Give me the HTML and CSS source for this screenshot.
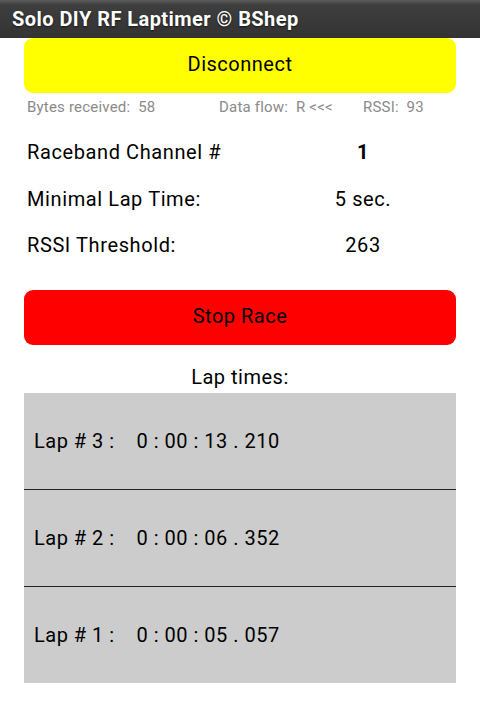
FILE: index.html
```html
<!DOCTYPE html>
<html>
<head>
<meta charset="utf-8">
<link rel="stylesheet" href="styles.css">
</head>
<body>
<header class="titlebar">Solo DIY RF Laptimer © BShep</header>
<main class="content">
  <button class="btn btn-yellow">Disconnect</button>
  <div class="status">
    <span>Bytes received:&nbsp; 58</span>
    <span>Data flow:&nbsp; R &lt;&lt;&lt;</span>
    <span>RSSI:&nbsp; 93</span>
  </div>
  <div class="settings">
    <div class="label">Raceband Channel #</div><div class="value bold">1</div>
    <div class="label">Minimal Lap Time:</div><div class="value">5 sec.</div>
    <div class="label">RSSI Threshold:</div><div class="value">263</div>
  </div>
  <button class="btn btn-red">Stop Race</button>
  <div class="laps-title">Lap times:</div>
  <ul class="laps">
    <li>Lap # 3 :&nbsp;&nbsp;&nbsp; 0 : 00 : 13 . 210</li>
    <li>Lap # 2 :&nbsp;&nbsp;&nbsp; 0 : 00 : 06 . 352</li>
    <li>Lap # 1 :&nbsp;&nbsp;&nbsp; 0 : 00 : 05 . 057</li>
  </ul>
</main>
</body>
</html>
```
FILE: styles.css
```css
* { box-sizing: border-box; }
html, body { margin: 0; padding: 0; background: #fff; }
body {
  font-family: Roboto, "Liberation Sans", sans-serif;
  color: #000;
  width: 480px;
  height: 708px;
  overflow: hidden;
}
.titlebar {
  height: 38px;
  background: linear-gradient(#5c5c5c 0px, #3e3e3e 5px, #333 100%);
  color: #fff;
  font-weight: bold;
  font-size: 20px;
  letter-spacing: 0.45px;
  line-height: 38px;
  padding-left: 12px;
  text-shadow: 0 1px 2px rgba(0,0,0,0.6);
}
.content {
  padding: 0 24px;
}
.btn {
  display: block;
  width: 100%;
  height: 55px;
  border: none;
  border-radius: 9px;
  font-family: Roboto, "Liberation Sans", sans-serif;
  font-size: 20px;
  letter-spacing: 0.5px;
  color: #000;
  padding: 0;
}
.btn-yellow { background: #ffff00; padding-bottom: 3px; }
.btn-red { background: #ff0000; margin-top: 21px; padding-bottom: 3px; }
.status {
  display: grid;
  grid-template-columns: 192px 144px 1fr;
  padding-left: 3px;
  margin-top: 5px;
  height: 18px;
  line-height: 18px;
  font-size: 15px;
  letter-spacing: 0.2px;
  color: #8a8a8a;
}
.settings {
  display: grid;
  grid-template-columns: 246px 186px;
  grid-auto-rows: 46.5px;
  margin-top: 13px;
  font-size: 20px;
  letter-spacing: 0.6px;
  align-items: center;
}
.label { padding-left: 3px; }
.value { text-align: center; }
.bold { font-weight: bold; }
.laps-title {
  text-align: center;
  font-size: 20px;
  letter-spacing: 0.5px;
  height: 48px;
  line-height: 26px;
  padding-top: 19px;
}
.laps {
  list-style: none;
  margin: 0;
  padding: 0;
  background: #cccccc;
}
.laps li {
  height: 97px;
  line-height: 96px;
  padding-left: 10px;
  font-size: 20px;
  letter-spacing: 0.5px;
  border-bottom: 1px solid #222;
}
.laps li:last-child { border-bottom: none; height: 96px; }
```
